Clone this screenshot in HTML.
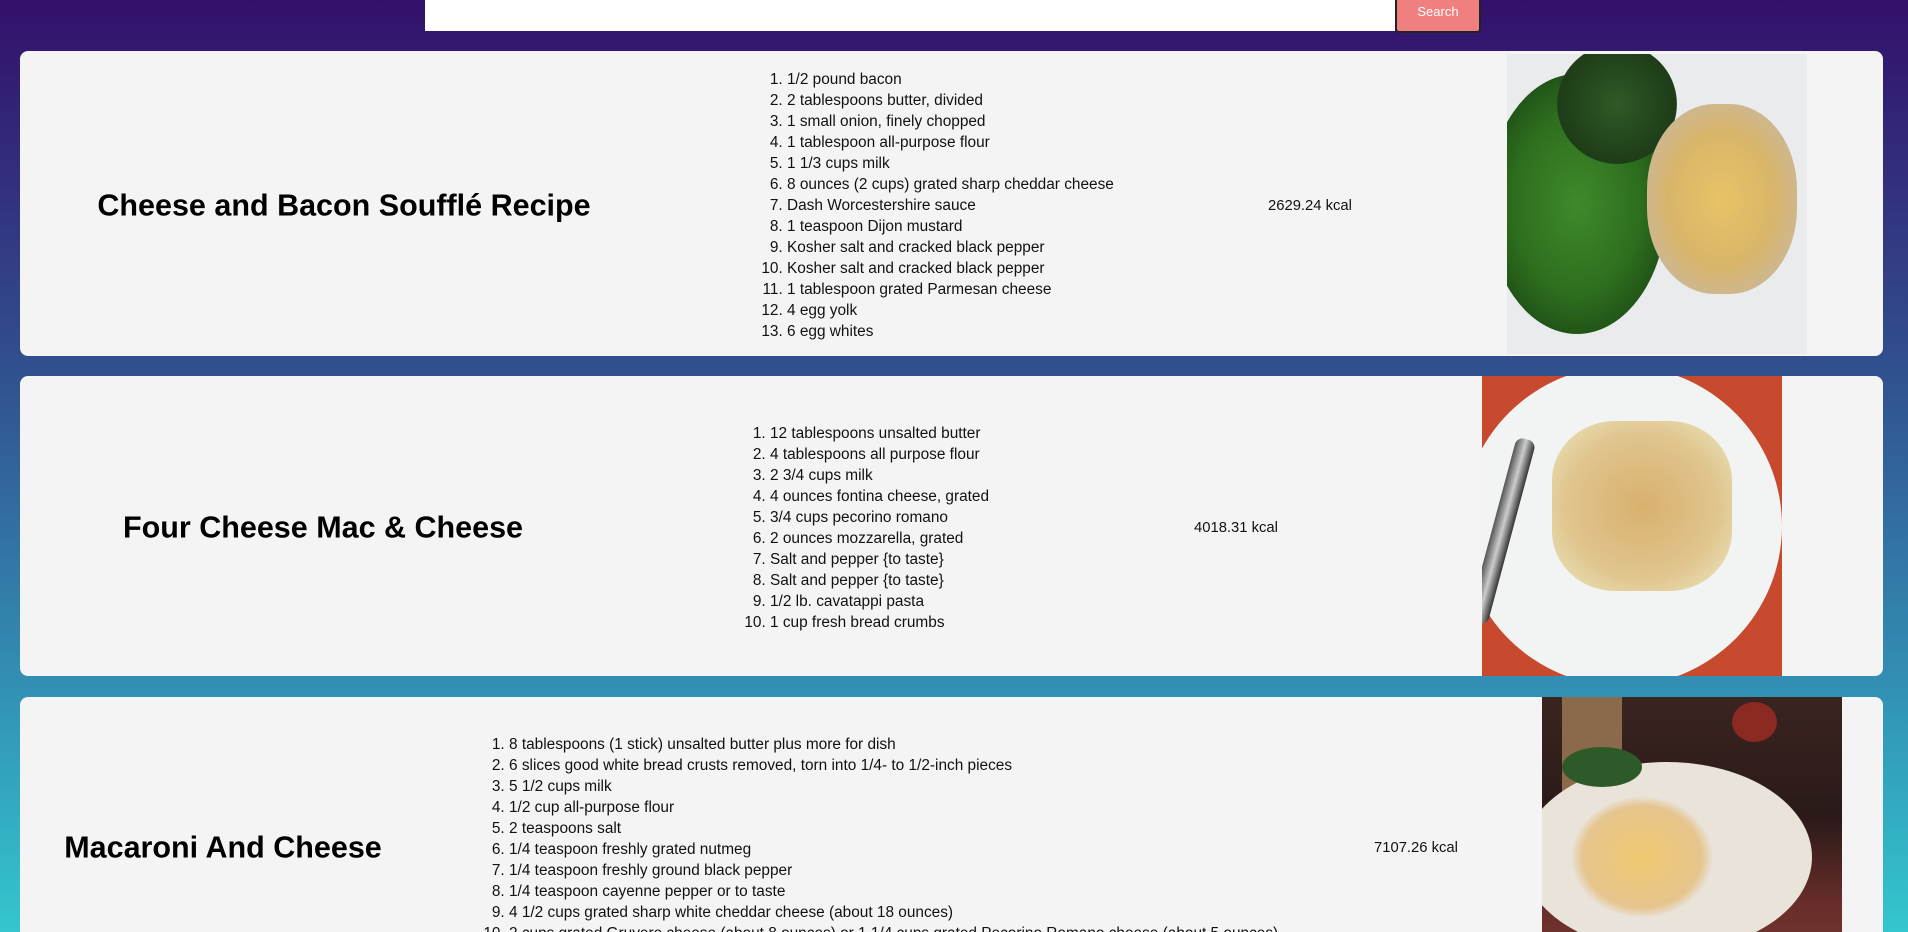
<!DOCTYPE html>
<html><head><meta charset="utf-8">
<style>
*{margin:0;padding:0;box-sizing:border-box}
html,body{width:1908px;height:932px;overflow:hidden}
body{background:linear-gradient(180deg,#33106b 0px,#322a7a 150px,#31508e 370px,#3286b0 640px,#33c6ce 932px);font-family:"Liberation Sans",sans-serif;position:relative}
.search{position:absolute;left:425px;top:0;width:970px;height:31px;background:#fff}
.btn{position:absolute;left:1395px;top:-3px;width:86px;height:36px;background:#f08080;border:2px solid #222;border-top:none;border-radius:0 0 4px 4px;color:#fff;font-size:13px;text-align:center;line-height:30px}
.card{position:absolute;left:20px;width:1863px;background:#f4f4f4;border-radius:8px;overflow:hidden}
.t{position:absolute;font-weight:bold;font-size:30.5px;color:#000;transform:translate(-50%,-50%);white-space:nowrap}
ol{position:absolute;font-size:15.4px;line-height:21px;color:#111;padding-left:24px}
.k{position:absolute;font-size:14.8px;color:#111;transform:translateY(-50%)}
.img{position:absolute;width:300px;height:300px;overflow:hidden}
</style></head><body>
<div class="search"></div><div class="btn">Search</div>

<div class="card" style="top:51px;height:305px">
 <div class="t" style="left:324px;top:155px">Cheese and Bacon Soufflé Recipe</div>
 <ol style="left:743px;top:18px">
  <li>1/2 pound bacon</li><li>2 tablespoons butter, divided</li><li>1 small onion, finely chopped</li><li>1 tablespoon all-purpose flour</li><li>1 1/3 cups milk</li><li>8 ounces (2 cups) grated sharp cheddar cheese</li><li>Dash Worcestershire sauce</li><li>1 teaspoon Dijon mustard</li><li>Kosher salt and cracked black pepper</li><li>Kosher salt and cracked black pepper</li><li>1 tablespoon grated Parmesan cheese</li><li>4 egg yolk</li><li>6 egg whites</li>
 </ol>
 <div class="k" style="left:1248px;top:155px">2629.24 kcal</div>
 <div class="img" style="left:1487px;top:3px;background:#e9ebec">
  <div style="position:absolute;left:-20px;top:20px;width:180px;height:260px;border-radius:50%;background:radial-gradient(ellipse,#3f8a2a 0%,#2d6e1e 50%,#1c4a14 80%,transparent 82%)"></div>
  <div style="position:absolute;left:50px;top:-10px;width:120px;height:120px;border-radius:50%;background:radial-gradient(#2f5a26,#1e3c18 70%,transparent 72%)"></div>
  <div style="position:absolute;left:140px;top:50px;width:150px;height:190px;border-radius:45%;background:radial-gradient(#e8c366,#d9b56a 50%,#cbb89a 80%,transparent 82%)"></div>
 </div>
</div>

<div class="card" style="top:376px;height:300px">
 <div class="t" style="left:303px;top:152px">Four Cheese Mac &amp; Cheese</div>
 <ol style="left:726px;top:47px">
  <li>12 tablespoons unsalted butter</li><li>4 tablespoons all purpose flour</li><li>2 3/4 cups milk</li><li>4 ounces fontina cheese, grated</li><li>3/4 cups pecorino romano</li><li>2 ounces mozzarella, grated</li><li>Salt and pepper {to taste}</li><li>Salt and pepper {to taste}</li><li>1/2 lb. cavatappi pasta</li><li>1 cup fresh bread crumbs</li>
 </ol>
 <div class="k" style="left:1174px;top:152px">4018.31 kcal</div>
 <div class="img" style="left:1462px;top:0;background:#c84a2e">
  <div style="position:absolute;left:-20px;top:-10px;width:320px;height:320px;border-radius:50%;background:#f2f3f3"></div>
  <div style="position:absolute;left:70px;top:45px;width:180px;height:170px;border-radius:35%;background:radial-gradient(#d9b06e,#e0c58e 60%,#e6d7a8 80%,transparent 84%)"></div>
  <div style="position:absolute;left:10px;top:60px;width:20px;height:190px;background:linear-gradient(90deg,#555,#ccc,#333);transform:rotate(15deg);border-radius:8px"></div>
 </div>
</div>

<div class="card" style="top:697px;height:235px;border-radius:8px 8px 0 0">
 <div class="t" style="left:203px;top:151px">Macaroni And Cheese</div>
 <ol style="left:465px;top:37px">
  <li>8 tablespoons (1 stick) unsalted butter plus more for dish</li><li>6 slices good white bread crusts removed, torn into 1/4- to 1/2-inch pieces</li><li>5 1/2 cups milk</li><li>1/2 cup all-purpose flour</li><li>2 teaspoons salt</li><li>1/4 teaspoon freshly grated nutmeg</li><li>1/4 teaspoon freshly ground black pepper</li><li>1/4 teaspoon cayenne pepper or to taste</li><li>4 1/2 cups grated sharp white cheddar cheese (about 18 ounces)</li><li>2 cups grated Gruyere cheese (about 8 ounces) or 1 1/4 cups grated Pecorino Romano cheese (about 5 ounces)</li>
 </ol>
 <div class="k" style="left:1354px;top:151px">7107.26 kcal</div>
 <div class="img" style="left:1522px;top:0;background:linear-gradient(180deg,#3a2420,#2a1a18 40%,#6a2e2a 70%,#7a3a34)">
  <div style="position:absolute;left:20px;top:0;width:60px;height:120px;background:#8a6a4a"></div>
  <div style="position:absolute;left:-20px;top:65px;width:290px;height:190px;border-radius:50%;background:#e9e3da"></div>
  <div style="position:absolute;left:30px;top:100px;width:140px;height:120px;border-radius:50%;background:radial-gradient(#f0c870,#e6c58e 60%,transparent 72%)"></div>
  <div style="position:absolute;left:20px;top:50px;width:80px;height:40px;border-radius:50%;background:#2e5a2a"></div>
  <div style="position:absolute;left:190px;top:5px;width:45px;height:40px;border-radius:50%;background:#8a2a22"></div>
 </div>
</div>
</body></html>
